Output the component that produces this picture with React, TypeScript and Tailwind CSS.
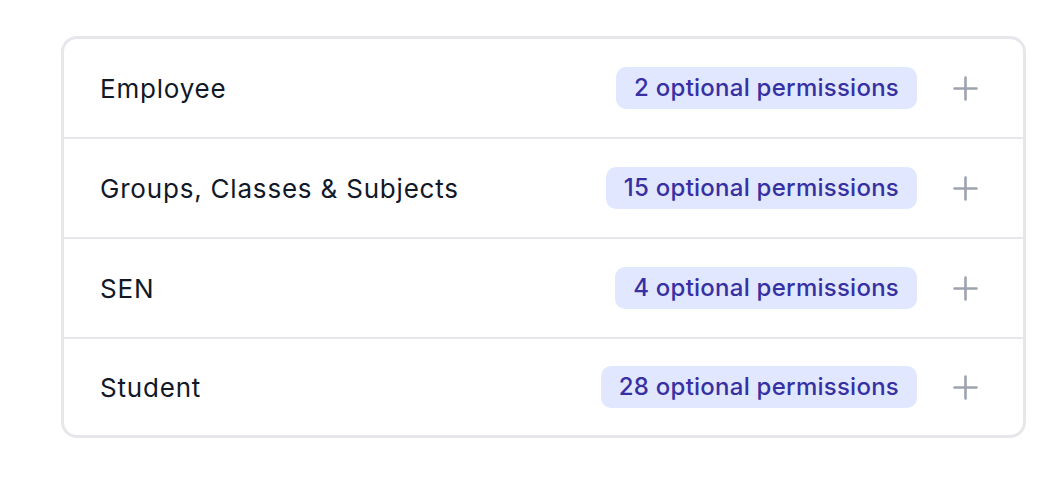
import React from "react";

const rows = [
  { name: "Employee", count: 2, h: "h-[98px]" },
  { name: "Groups, Classes & Subjects", count: 15, h: "h-[100px] border-t-2 border-[#e5e7eb]" },
  { name: "SEN", count: 4, h: "h-[100px] border-t-2 border-[#e5e7eb]" },
  { name: "Student", count: 28, h: "h-[98px] border-t-2 border-[#e5e7eb]" },
];

function Plus() {
  return (
    <svg width="25" height="25" viewBox="0 0 25 25" fill="none" stroke="#9ca3af" strokeWidth="2.6" strokeLinecap="round">
      <path d="M12.5 1.5v22M1.5 12.5h22" />
    </svg>
  );
}

export default function App() {
  return (
    <div className="w-[1050px] h-[492px] bg-white pt-[36px] pl-[61px]" style={{ fontFamily: "Inter, 'Noto Sans', sans-serif" }}>
      <div className="w-[965px] border-[3px] border-[#e5e7eb] rounded-[16px] overflow-hidden">
        {rows.map((r) => (
          <div
            key={r.name}
            className={`flex items-center justify-between pl-[36px] pr-[45px] ${r.h}`}
          >
            <span className="text-[26px] tracking-[0.8px] text-[#111827]">{r.name}</span>
            <div className="flex items-center gap-[36px]">
              <span className="bg-[#e0e7ff] text-[#3730a3] text-[24px] tracking-[0.25px] font-medium rounded-[10px] px-[18px] h-[42px] flex items-center">
                {r.count} optional permissions
              </span>
              <Plus />
            </div>
          </div>
        ))}
      </div>
    </div>
  );
}
